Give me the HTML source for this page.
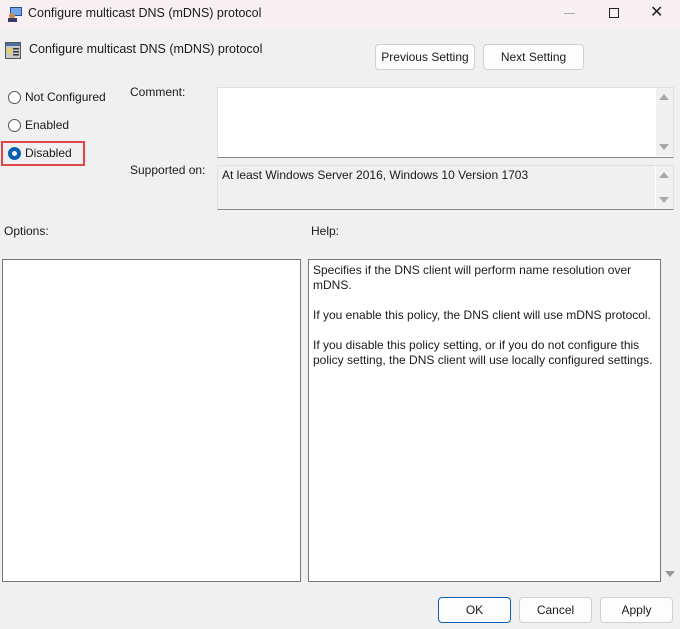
<!DOCTYPE html>
<html><head><style>
*{box-sizing:border-box;margin:0;padding:0}
body{width:680px;height:629px;background:#f0f0f0;font-family:"Liberation Sans",sans-serif;font-size:12px;color:#1a1a1a;position:relative;overflow:hidden}
.a{position:absolute;white-space:nowrap}
.tb{position:absolute;left:0;top:0;width:680px;height:28px;background:#f7eff2}
.btn{position:absolute;height:26px;background:#fdfdfd;border:1px solid #d0d0d0;border-radius:4px;text-align:center;line-height:24px}
.rad{position:absolute;width:13px;height:13px;border:1px solid #555;border-radius:50%;background:#fff}
.box{position:absolute;border:1px solid #b8b8b8;background:#fff}
.tri{position:absolute;width:0;height:0;border-left:5px solid transparent;border-right:5px solid transparent}
.up{border-bottom:6px solid #a8a8a8}.dn{border-top:6px solid #a8a8a8}
</style></head><body>
<div class="tb"></div>
<svg class="a" style="left:7px;top:6px" width="16" height="16"><rect x="3" y="1" width="12" height="9" fill="#1c4f9c"/><rect x="4" y="2" width="10" height="7" fill="#6ea6e8"/><circle cx="5" cy="10" r="3" fill="#c98a4a"/><rect x="1" y="12" width="9" height="4" fill="#3a3a6a"/></svg>
<div class="a" style="left:28px;top:6px;font-size:12.5px">Configure multicast DNS (mDNS) protocol</div>
<div class="a" style="left:564px;top:13px;width:11px;height:1px;background:#aaa"></div>
<div class="a" style="left:609px;top:8px;width:10px;height:10px;border:1px solid #222"></div>
<div class="a" style="left:650px;top:2px;font-size:16px;color:#222">✕</div>
<svg class="a" style="left:5px;top:42px" width="16" height="17"><rect x="0.5" y="0.5" width="15" height="16" fill="#c8c8c8" stroke="#555"/><rect x="1" y="1" width="14" height="3" fill="#4a6fa0"/><rect x="2" y="6" width="5" height="6" fill="#e0d070"/><rect x="8" y="6" width="6" height="1.5" fill="#333"/><rect x="8" y="9" width="6" height="1.5" fill="#333"/><rect x="8" y="12" width="6" height="1.5" fill="#333"/></svg>
<div class="a" style="left:29px;top:42px;font-size:12.5px">Configure multicast DNS (mDNS) protocol</div>
<div class="btn" style="left:375px;top:44px;width:100px">Previous Setting</div>
<div class="btn" style="left:483px;top:44px;width:101px">Next Setting</div>
<div class="rad" style="left:8px;top:91px"></div><div class="a" style="left:25px;top:90px">Not Configured</div>
<div class="rad" style="left:8px;top:119px"></div><div class="a" style="left:25px;top:118px">Enabled</div>
<div class="a" style="left:1px;top:141px;width:84px;height:25px;border:2px solid #e04848"></div>
<div class="a" style="left:8px;top:147px;width:13px;height:13px;border-radius:50%;background:#0a5fb4"></div>
<div class="a" style="left:12px;top:151px;width:5px;height:5px;border-radius:50%;background:#fff"></div>
<div class="a" style="left:25px;top:146px">Disabled</div>
<div class="a" style="left:130px;top:85px">Comment:</div>
<div class="box" style="left:217px;top:87px;width:457px;height:71px;border-color:#e0e0e0;border-bottom:1px solid #888"></div>
<div class="a" style="left:656px;top:88px;width:17px;height:68px;background:#f0f0f0"></div>
<div class="tri up" style="left:659px;top:94px"></div><div class="tri dn" style="left:659px;top:144px"></div>
<div class="a" style="left:130px;top:163px">Supported on:</div>
<div class="a" style="left:217px;top:165px;width:457px;height:45px;border:1px solid #e0e0e0;border-bottom:1px solid #888;background:#f0f0f0"></div>
<div class="a" style="left:655px;top:166px;width:1px;height:42px;background:#fff"></div>
<div class="a" style="left:222px;top:168px">At least Windows Server 2016, Windows 10 Version 1703</div>
<div class="tri up" style="left:659px;top:172px"></div><div class="tri dn" style="left:659px;top:197px"></div>
<div class="a" style="left:4px;top:224px">Options:</div>
<div class="a" style="left:311px;top:224px">Help:</div>
<div class="box" style="left:2px;top:259px;width:299px;height:323px;border-color:#777"></div>
<div class="box" style="left:308px;top:259px;width:353px;height:323px;border-color:#777;padding:3px 4px;line-height:15px;white-space:normal">Specifies if the DNS client will perform name resolution over mDNS.<br><br>If you enable this policy, the DNS client will use mDNS protocol.<br><br>If you disable this policy setting, or if you do not configure this policy setting, the DNS client will use locally configured settings.</div>
<div class="tri dn" style="left:665px;top:571px;border-top-color:#999"></div>
<div class="btn" style="left:438px;top:597px;width:73px;border-color:#0a5fb4">OK</div>
<div class="btn" style="left:519px;top:597px;width:73px">Cancel</div>
<div class="btn" style="left:600px;top:597px;width:73px">Apply</div>
</body></html>
